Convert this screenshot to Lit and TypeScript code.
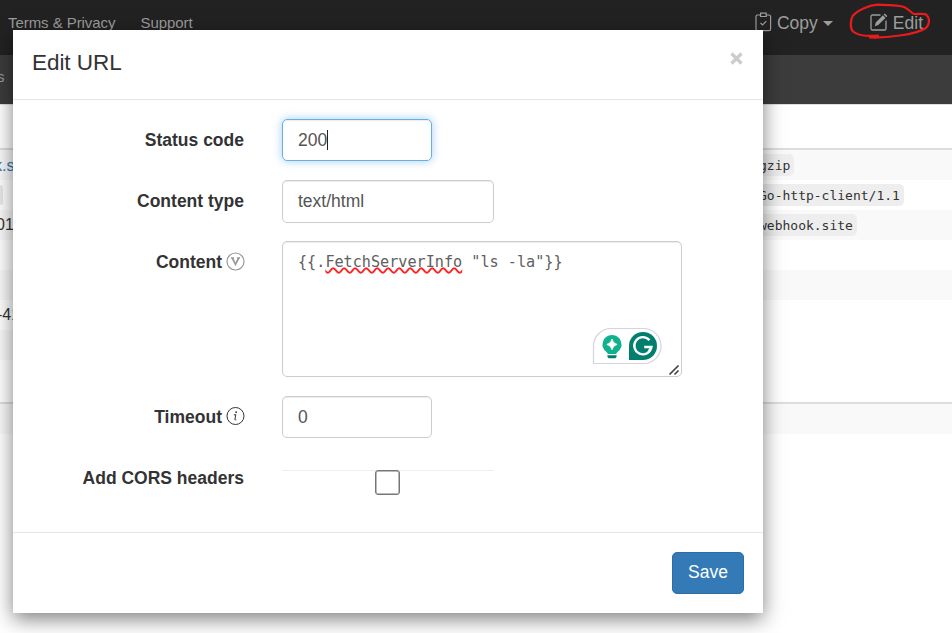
import { LitElement, html, svg, css } from "lit";
import { customElement } from "lit/decorators.js";

const sans = css`"Liberation Sans", Arial, sans-serif`;
const mono = css`"DejaVu Sans Mono", monospace`;

@customElement("request-page")
class RequestPage extends LitElement {
  static styles = css`
    :host { display: block; height: 633px; background: #fff; font-family: ${sans}; font-size: 15px; color: #333; }
    .nav { height: 55px; box-sizing: border-box; padding: 0 0 10px 8px; background: #222; color: #9d9d9d; display: flex; align-items: center; }
    .link { margin-right: 25px; white-space: nowrap; letter-spacing: -.06px; }
    .tools { margin-left: auto; padding: 1px 29px 0 0; display: flex; align-items: center; font-size: 17.5px; }
    .tool { display: flex; align-items: center; }
    .tool svg { margin-right: 5px; margin-top: -2px; }
    .caret { border: 5px solid transparent; border-top-color: #9d9d9d; border-bottom: 0; margin: 1px 37px 0 5px; }
    .sub { height: 49px; box-sizing: border-box; padding-top: 13px; background: #3c3c3c; color: #9d9d9d; overflow: hidden; }
    .sub span { display: block; margin-left: -3px; line-height: 18px; }
    .tables { border-top: 1px solid #ddd; padding-top: 43px; display: grid; grid-template-columns: 380px 1fr; }
    .row { height: 30px; box-sizing: border-box; line-height: 29px; white-space: nowrap; font-size: 16px; }
    .table { border-top: 2px solid #ddd; }
    .row:nth-child(odd) { background: #f9f9f9; }
    .link-text { color: #337ab7; margin-left: -6px; line-height: 31px; }
    .num { margin-left: -4px; }
    .dash { margin-left: -3px; }
    .right .row { padding-left: 375px; display: flex; align-items: center; }
    code { font: 13px/23px ${mono}; height: 22px; background: #eee; border-radius: 5px; padding: 0 4px; }
    .chip { display: inline-block; width: 3px; height: 20px; margin-top: 5px; background: #e8e8e8; border-radius: 0 5px 5px 0; }
    .query { margin-top: 42px; border-top: 2px solid #ddd; }
    .query .row { background: #f9f9f9; }
  `;
  render() {
    return html`
      <div class="nav">
        <span class="link">Terms &amp; Privacy</span><span class="link">Support</span>
        <div class="tools">
          <span class="tool"><svg width="17" height="20" viewBox="0 0 17 20" fill="none" stroke="#9d9d9d" stroke-width="1.200">
            <path d="M5.500 3H2.600Q1 3 1 4.600V17Q1 18.600 2.600 18.600H14Q15.600 18.600 15.600 17V4.600Q15.600 3 14 3H11.400M5.600 1.200H11.200V4.500H5.600ZM5.500 11L7.600 13L11.300 9.200"/>
          </svg>Copy<span class="caret"></span></span>
          <span class="tool"><svg width="18" height="18" viewBox="0 0 18 18" fill="none" stroke="#9d9d9d" stroke-width="1.300">
            <path d="M10.500 2H2.600Q1 2 1 3.600V15.400Q1 17 2.600 17H14.500Q16 17 16 15.400V7.500"/>
            <path fill="#9d9d9d" stroke="none" d="M14.800.5L17.300 3L16.200 4.200L13.600 1.600ZM12.900 2.300L15.500 4.900L8.200 12L4.800 13.200L5.800 9.500Z"/>
          </svg>Edit</span>
        </div>
      </div>
      <div class="sub"><span>s</span></div>
      <div class="tables">
        <div class="table left">
          <div class="row"><span class="link-text">k.s</span></div>
          <div class="row"><span class="chip"></span></div>
          <div class="row"><span class="num">01</span></div>
          <div class="row"></div><div class="row"></div>
          <div class="row"><span class="dash">-41</span></div>
          <div class="row"></div>
        </div>
        <div class="table right">
          ${["gzip", "Go-http-client/1.1", "webhook.site", "", ""].map(
            (v) => html`<div class="row">${v ? html`<code>${v}</code>` : ""}</div>`)}
        </div>
      </div>
      <div class="query"><div class="row"></div></div>
    `;
  }
}

@customElement("edit-dialog")
class EditDialog extends LitElement {
  static styles = css`
    :host { display: flex; flex-direction: column; box-sizing: border-box; width: 750px; height: 583px; background: #fff; box-shadow: 0 6px 19px rgba(0,0,0,.5); font-family: ${sans}; font-size: 17.5px; color: #333; }
    .header { height: 70px; box-sizing: border-box; border-bottom: 1px solid #e5e5e5; display: flex; justify-content: space-between; padding: 19px 20px 0 19px; font-size: 22.5px; line-height: 28px; letter-spacing: -.05px; }
    .close { margin-top: 3px; width: 13px; height: 13px; }
    .body { box-sizing: border-box; height: 432px; padding-top: 19px; flex: none; }
    .field { display: grid; grid-template-columns: 231px 1fr; column-gap: 38px; margin-bottom: 19px; }
    .label { font-weight: 700; text-align: right; line-height: 20px; padding-top: 11px; display: flex; justify-content: flex-end; align-items: flex-start; white-space: nowrap; }
    .icon { margin: 0 -1px 0 4px; display: block; flex: none; }
    .control { box-sizing: border-box; width: 150px; height: 42px; padding: 0 15px; border: 1px solid #ccc; border-radius: 5px; box-shadow: inset 0 1px 1px rgba(0,0,0,.075); color: #555; line-height: 40px; display: flex; align-items: center; }
    .focus { border-color: #66afe9; box-shadow: inset 0 1px 1px rgba(0,0,0,.075), 0 0 10px rgba(102,175,233,.6); }
    .cursor { width: 1px; height: 20px; background: #222; }
    .wide { width: 212px; height: 43px; padding-bottom: 2px; }
    .tight { margin-bottom: 18px; }
    .area { position: relative; width: 400px; height: 136px; align-items: flex-start; font: 15.170px/20px ${mono}; padding-top: 10px; white-space: pre; color: #606060; }
    .typo { text-decoration: underline wavy #f22 1.800px; text-underline-offset: 0; text-decoration-skip-ink: none; }
    .helper { position: absolute; right: 19px; bottom: 11px; }
    .grip { position: absolute; right: 1px; bottom: 0; }
    .cors { margin: 0; }
    .check { width: 212px; height: 25px; margin-top: 13px; box-sizing: border-box; border-top: 1px solid #eee; display: flex; justify-content: center; padding-right: 1px; }
    .box { box-sizing: border-box; width: 25px; height: 25px; margin-top: -1px; border: 1px solid #767676; border-radius: 3px; background: #fff; box-shadow: inset 0 0 0 .5px #767676; }
    .footer { border-top: 1px solid #e5e5e5; padding: 19px 19px 0; display: flex; justify-content: flex-end; }
    .save { box-sizing: border-box; width: 72px; height: 42px; border: 1px solid #2e6da4; border-radius: 5px; background: #337ab7; color: #fff; font: 17.5px ${sans}; padding: 0 0 2px; }
  `;
  mark(kind: string) {
    return html`<svg class="icon" width="19" height="19" viewBox="0 0 19 19" fill="none">
      ${kind === "v"
        ? svg`<circle cx="9.500" cy="9.500" r="8.500" stroke="#999" stroke-width="1.200"/><path d="M5 6H8M11 6H14M6.300 6L9.500 12.300L12.700 6" stroke="#999" stroke-width="1.700"/>`
        : svg`<circle cx="9.500" cy="9" r="8.500" stroke="#333" stroke-width="1"/><circle cx="10.100" cy="5.200" r=".9" fill="#333"/><path d="M7.800 7.900L9.800 7.600L8.900 12.500Q8.900 13.400 10.300 12.700" stroke="#333" stroke-width="1"/>`}
    </svg>`;
  }
  render() {
    return html`
      <div class="header"><span>Edit URL</span>
        <svg class="close" viewBox="0 0 13 13"><path d="M1.500 1.500L11.500 11.500M11.500 1.500L1.500 11.500" stroke="#ccc" stroke-width="3.200"/></svg>
      </div>
      <div class="body">
        <div class="field"><div class="label">Status code</div><div class="control focus">200<span class="cursor"></span></div></div>
        <div class="field tight"><div class="label">Content type</div><div class="control wide">text/html</div></div>
        <div class="field"><div class="label">Content${this.mark("v")}</div>
          <div class="control area"><span>{{.<span class="typo">FetchServerInfo</span> "ls -la"}}</span>
            <svg class="helper" width="70" height="38" viewBox="0 0 70 38" fill="none">
              <path d="M1.500 36.500V18.500A17.500 17.500 0 0 1 19 1.500H51.500A17.500 17.500 0 0 1 51.500 36.500Z" fill="#fff" stroke="#d3d4df" stroke-width="1.200"/>
              <path d="M20 8A9.400 9.400 0 0 0 14.500 25Q15.500 26 15.800 27H24.200Q24.500 26 25.500 25A9.400 9.400 0 0 0 20 8Z" fill="#11b18d"/>
              <path d="M20 12Q20.900 16.300 25.200 17.400Q20.900 18.500 20 22.800Q19.100 18.500 14.800 17.400Q19.100 16.300 20 12Z" fill="#fff" stroke="#fff" stroke-width=".7"/>
              <path d="M15.300 28.200H24.700Q24.700 31.300 22.200 31.300H17.800Q15.300 31.300 15.300 28.200Z" fill="#027e6f"/>
              <path d="M37 33V19A14 14 0 1 1 51 33Z" fill="#027e6f"/>
              <path d="M57.500 13.200A8.600 8.600 0 1 0 59.400 20H52.200M59.400 20L57 24" stroke="#fff" stroke-width="2.400"/>
            </svg>
            <svg class="grip" width="13" height="12" viewBox="0 0 13 12" stroke="#444" stroke-width="1.700"><path d="M2.500 10.500L11.500 1.500M7.500 10.500L11.500 6.500"/></svg>
          </div></div>
        <div class="field"><div class="label">Timeout${this.mark("i")}</div><div class="control">0</div></div>
        <div class="field cors"><div class="label">Add CORS headers</div><div class="check"><span class="box"></span></div></div>
      </div>
      <div class="footer"><button class="save">Save</button></div>
    `;
  }
}

@customElement("app-root")
class AppRoot extends LitElement {
  static styles = css`
    :host { display: block; position: relative; width: 952px; height: 633px; overflow: hidden; }
    .dialog { position: absolute; left: 13px; top: 30px; }
    .scribble { position: absolute; left: 845px; top: 0; }
  `;
  render() {
    return html`
      <request-page></request-page>
      <edit-dialog class="dialog"></edit-dialog>
      <svg class="scribble" width="90" height="42" viewBox="845 0 90 42" fill="none" stroke="#e81b1e" stroke-width="2.200" stroke-linecap="round" stroke-linejoin="round">
        <path d="M878 35.700C867 36.500 857 35 853 31.500C850 28 850 20 853 15.500C858 10 869 5 878 4.700C888 5 899 5 904 7C909 9 911 13 914 14C918 14.500 924 13 926 14.500C930 18 930 24 926 28C920 32 911 34 900 35.500Q884 38 870 37.500"/>
      </svg>
    `;
  }
}
